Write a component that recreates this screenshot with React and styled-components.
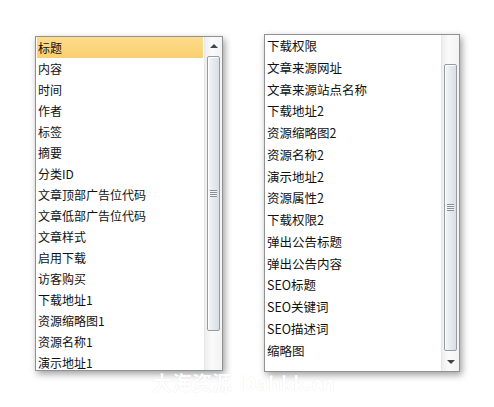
import React from "react";
import styled, { createGlobalStyle } from "styled-components";

const Global = createGlobalStyle`
  html, body {
    margin: 0;
    padding: 0;
    background: #ffffff;
  }
  body {
    font-family: "Noto Sans CJK SC", "Liberation Sans", sans-serif;
  }
`;

const Page = styled.div`
  position: relative;
  width: 494px;
  height: 407px;
  display: flex;
  align-items: flex-start;
  gap: 41px;
  padding: 34px 0 0 35px;
  box-sizing: border-box;
  overflow: hidden;
`;

const ListBox = styled.div`
  display: flex;
  margin-top: ${(p) => p.$offset}px;
  width: ${(p) => p.$width}px;
  height: ${(p) => p.$height}px;
  box-sizing: border-box;
  border: 1px solid #8f9193;
  background: #ffffff;
  box-shadow: 2px 3px 7px rgba(0, 0, 0, 0.38);
  overflow: hidden;
`;

const Items = styled.div`
  flex: 1;
  padding: 0 1px 0 ${(p) => p.$pad}px;
  overflow: hidden;
`;

const Item = styled.div`
  height: ${(p) => p.$row}px;
  line-height: ${(p) => p.$row}px;
  padding-left: 1px;
  font-size: ${(p) => p.$size}px;
  color: #111111;
  white-space: nowrap;
  background: ${(p) =>
    p.$selected ? "linear-gradient(#fddc8c, #fbcf6f)" : "transparent"};
`;

const Bar = styled.div`
  width: 17px;
  flex: none;
  display: flex;
  flex-direction: column;
  align-items: center;
  background: linear-gradient(to right, #eeeeee, #fafafa 40%, #f3f3f3);
  border-left: 1px solid #e6e6e6;
`;

const Button = styled.div`
  width: 100%;
  height: ${(p) => p.$h}px;
  flex: none;
  display: flex;
  align-items: center;
  justify-content: center;
`;

const Arrow = styled.div`
  width: 0;
  height: 0;
  border-left: 4px solid transparent;
  border-right: 4px solid transparent;
  ${(p) =>
    p.$down
      ? "border-top: 4px solid #404448;"
      : "border-bottom: 4px solid #404448;"}
`;

const Thumb = styled.div`
  width: 13px;
  flex: none;
  margin-top: ${(p) => p.$gap}px;
  height: ${(p) => p.$h}px;
  box-sizing: border-box;
  border: 1px solid #979a9e;
  border-radius: 2px;
  background: linear-gradient(to right, #f4f5f7, #e6e9ee 50%, #dadee5);
  box-shadow: inset 1px 1px 0 #ffffff;
  display: flex;
  align-items: center;
  justify-content: center;
`;

const Grip = styled.div`
  width: 7px;
  height: 7px;
  background: repeating-linear-gradient(
    #8a8f96 0,
    #8a8f96 1px,
    #f2f4f6 1px,
    #f2f4f6 2px
  );
`;

const Spacer = styled.div`
  flex: 1;
`;

const Watermark = styled.div`
  position: absolute;
  left: 152px;
  top: 368px;
  display: flex;
  gap: 10px;
  font-size: 20px;
  font-weight: 700;
  color: #ffffff;
  text-shadow: 0 0 1px rgba(0, 0, 0, 0.12);
  opacity: 0.95;
  white-space: nowrap;
`;

const leftItems = [
  "标题", "内容", "时间", "作者", "标签", "摘要", "分类ID",
  "文章顶部广告位代码", "文章低部广告位代码", "文章样式", "启用下载",
  "访客购买", "下载地址1", "资源缩略图1", "资源名称1", "演示地址1",
];

const rightItems = [
  "下载权限", "文章来源网址", "文章来源站点名称", "下载地址2", "资源缩略图2",
  "资源名称2", "演示地址2", "资源属性2", "下载权限2", "弹出公告标题",
  "弹出公告内容", "SEO标题", "SEO关键词", "SEO描述词", "缩略图",
];

function ScrollBar({ up, upH, gap, thumbH, down }) {
  return (
    <Bar>
      <Button $h={upH}>{up && <Arrow />}</Button>
      <Thumb $gap={gap} $h={thumbH}>
        <Grip />
      </Thumb>
      <Spacer />
      {down && (
        <Button $h={18}>
          <Arrow $down />
        </Button>
      )}
    </Bar>
  );
}

export default function App() {
  return (
    <>
      <Global />
      <Page>
        <ListBox $offset={2} $width={188} $height={335}>
          <Items $pad={1}>
            {leftItems.map((t, i) => (
              <Item key={t} $row={21} $size={12} $selected={i === 0}>
                {t}
              </Item>
            ))}
          </Items>
          <ScrollBar up upH={17} gap={2} thumbH={275} />
        </ListBox>
        <ListBox $offset={0} $width={196} $height={338}>
          <Items $pad={1}>
            {rightItems.map((t) => (
              <Item key={t} $row={21.75} $size={12.5}>
                {t}
              </Item>
            ))}
          </Items>
          <ScrollBar upH={27} gap={2} thumbH={287} down />
        </ListBox>
        <Watermark>
          <span>大海资源</span>
          <span>Dahkk.cn</span>
        </Watermark>
      </Page>
    </>
  );
}
